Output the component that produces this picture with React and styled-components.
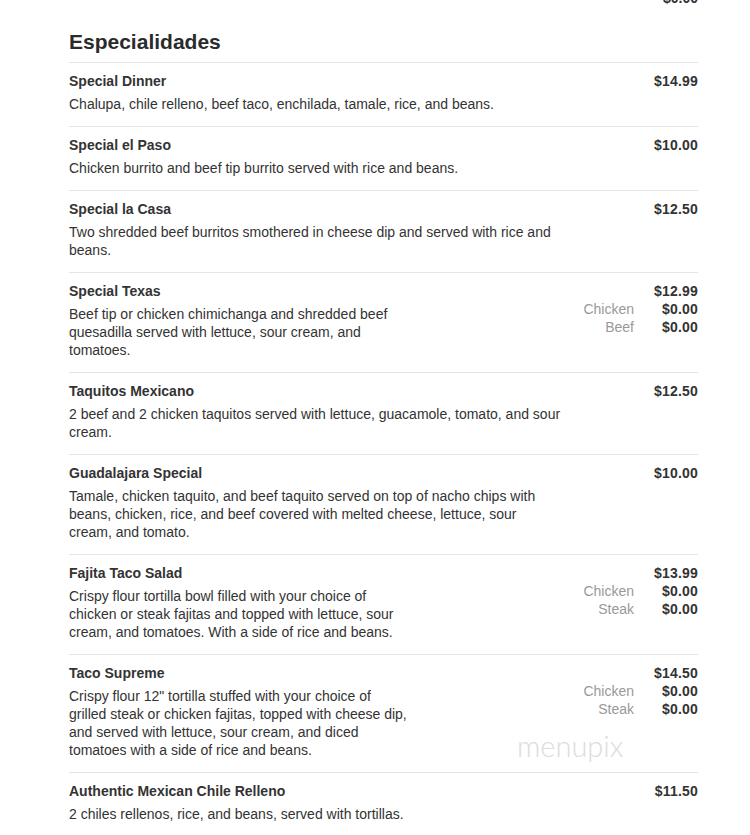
import React from "react";
import styled, { createGlobalStyle } from "styled-components";

const GlobalStyle = createGlobalStyle`
  html, body {
    margin: 0;
    padding: 0;
    background: #fff;
    overflow: hidden;
  }
  body {
    font-family: "Liberation Sans", Arial, sans-serif;
    color: #333;
  }
`;

const Page = styled.div`
  position: relative;
  width: 629px;
  margin: -11px 0 0 69px;
`;

const PrevTail = styled.div`
  display: flex;
  justify-content: flex-end;
  font-size: 14px;
  line-height: 18px;
  font-weight: bold;
  color: #333;
`;

const Heading = styled.h2`
  margin: 23px 0 8px;
  font-size: 21px;
  line-height: 24px;
  font-weight: bold;
  color: #2b2b2b;
`;

const Row = styled.div`
  display: flex;
  justify-content: space-between;
  align-items: flex-start;
  border-top: 1px solid #e5e5e5;
  padding: 9px 0 13px;
`;

const Info = styled.div`
  width: ${(p) => (p.narrow ? "340px" : "494px")};
`;

const Name = styled.div`
  font-size: 14px;
  line-height: 18px;
  font-weight: bold;
  color: #333;
`;

const Desc = styled.div`
  margin-top: 5px;
  font-size: 14px;
  line-height: 18px;
  color: #333;
`;

const Prices = styled.div`
  display: grid;
  grid-template-columns: auto 50px;
  column-gap: 14px;
  font-size: 14px;
  line-height: 18px;
`;

const Label = styled.div`
  text-align: right;
  color: #999;
`;

const Price = styled.div`
  text-align: right;
  font-weight: bold;
  color: #333;
  letter-spacing: 0.2px;
`;

const Watermark = styled.div`
  position: absolute;
  left: 448px;
  top: 739px;
  font-family: Lato, "Open Sans", sans-serif;
  font-weight: 300;
  font-size: 29px;
  color: #dcdcdc;
  pointer-events: none;
`;

const items = [
  {
    name: "Special Dinner",
    desc: "Chalupa, chile relleno, beef taco, enchilada, tamale, rice, and beans.",
    price: "$14.99",
  },
  {
    name: "Special el Paso",
    desc: "Chicken burrito and beef tip burrito served with rice and beans.",
    price: "$10.00",
  },
  {
    name: "Special la Casa",
    desc: "Two shredded beef burritos smothered in cheese dip and served with rice and beans.",
    price: "$12.50",
  },
  {
    name: "Special Texas",
    desc: "Beef tip or chicken chimichanga and shredded beef quesadilla served with lettuce, sour cream, and tomatoes.",
    price: "$12.99",
    options: [
      ["Chicken", "$0.00"],
      ["Beef", "$0.00"],
    ],
  },
  {
    name: "Taquitos Mexicano",
    desc: "2 beef and 2 chicken taquitos served with lettuce, guacamole, tomato, and sour cream.",
    price: "$12.50",
  },
  {
    name: "Guadalajara Special",
    desc: "Tamale, chicken taquito, and beef taquito served on top of nacho chips with beans, chicken, rice, and beef covered with melted cheese, lettuce, sour cream, and tomato.",
    price: "$10.00",
  },
  {
    name: "Fajita Taco Salad",
    desc: "Crispy flour tortilla bowl filled with your choice of chicken or steak fajitas and topped with lettuce, sour cream, and tomatoes. With a side of rice and beans.",
    price: "$13.99",
    options: [
      ["Chicken", "$0.00"],
      ["Steak", "$0.00"],
    ],
  },
  {
    name: "Taco Supreme",
    desc: 'Crispy flour 12" tortilla stuffed with your choice of grilled steak or chicken fajitas, topped with cheese dip, and served with lettuce, sour cream, and diced tomatoes with a side of rice and beans.',
    price: "$14.50",
    options: [
      ["Chicken", "$0.00"],
      ["Steak", "$0.00"],
    ],
  },
  {
    name: "Authentic Mexican Chile Relleno",
    desc: "2 chiles rellenos, rice, and beans, served with tortillas.",
    price: "$11.50",
  },
];

function MenuItem({ name, desc, price, options }) {
  const narrow = Boolean(options);
  return (
    <Row>
      <Info narrow={narrow}>
        <Name>{name}</Name>
        <Desc>{desc}</Desc>
      </Info>
      <Prices>
        <Label />
        <Price>{price}</Price>
        {narrow &&
          options.map(([label, value]) => (
            <React.Fragment key={label}>
              <Label>{label}</Label>
              <Price>{value}</Price>
            </React.Fragment>
          ))}
      </Prices>
    </Row>
  );
}

export default function App() {
  return (
    <>
      <GlobalStyle />
      <Page>
        <PrevTail>$0.00</PrevTail>
        <Heading>Especialidades</Heading>
        {items.map((item) => (
          <MenuItem key={item.name} {...item} />
        ))}
        <Watermark>menupix</Watermark>
      </Page>
    </>
  );
}
